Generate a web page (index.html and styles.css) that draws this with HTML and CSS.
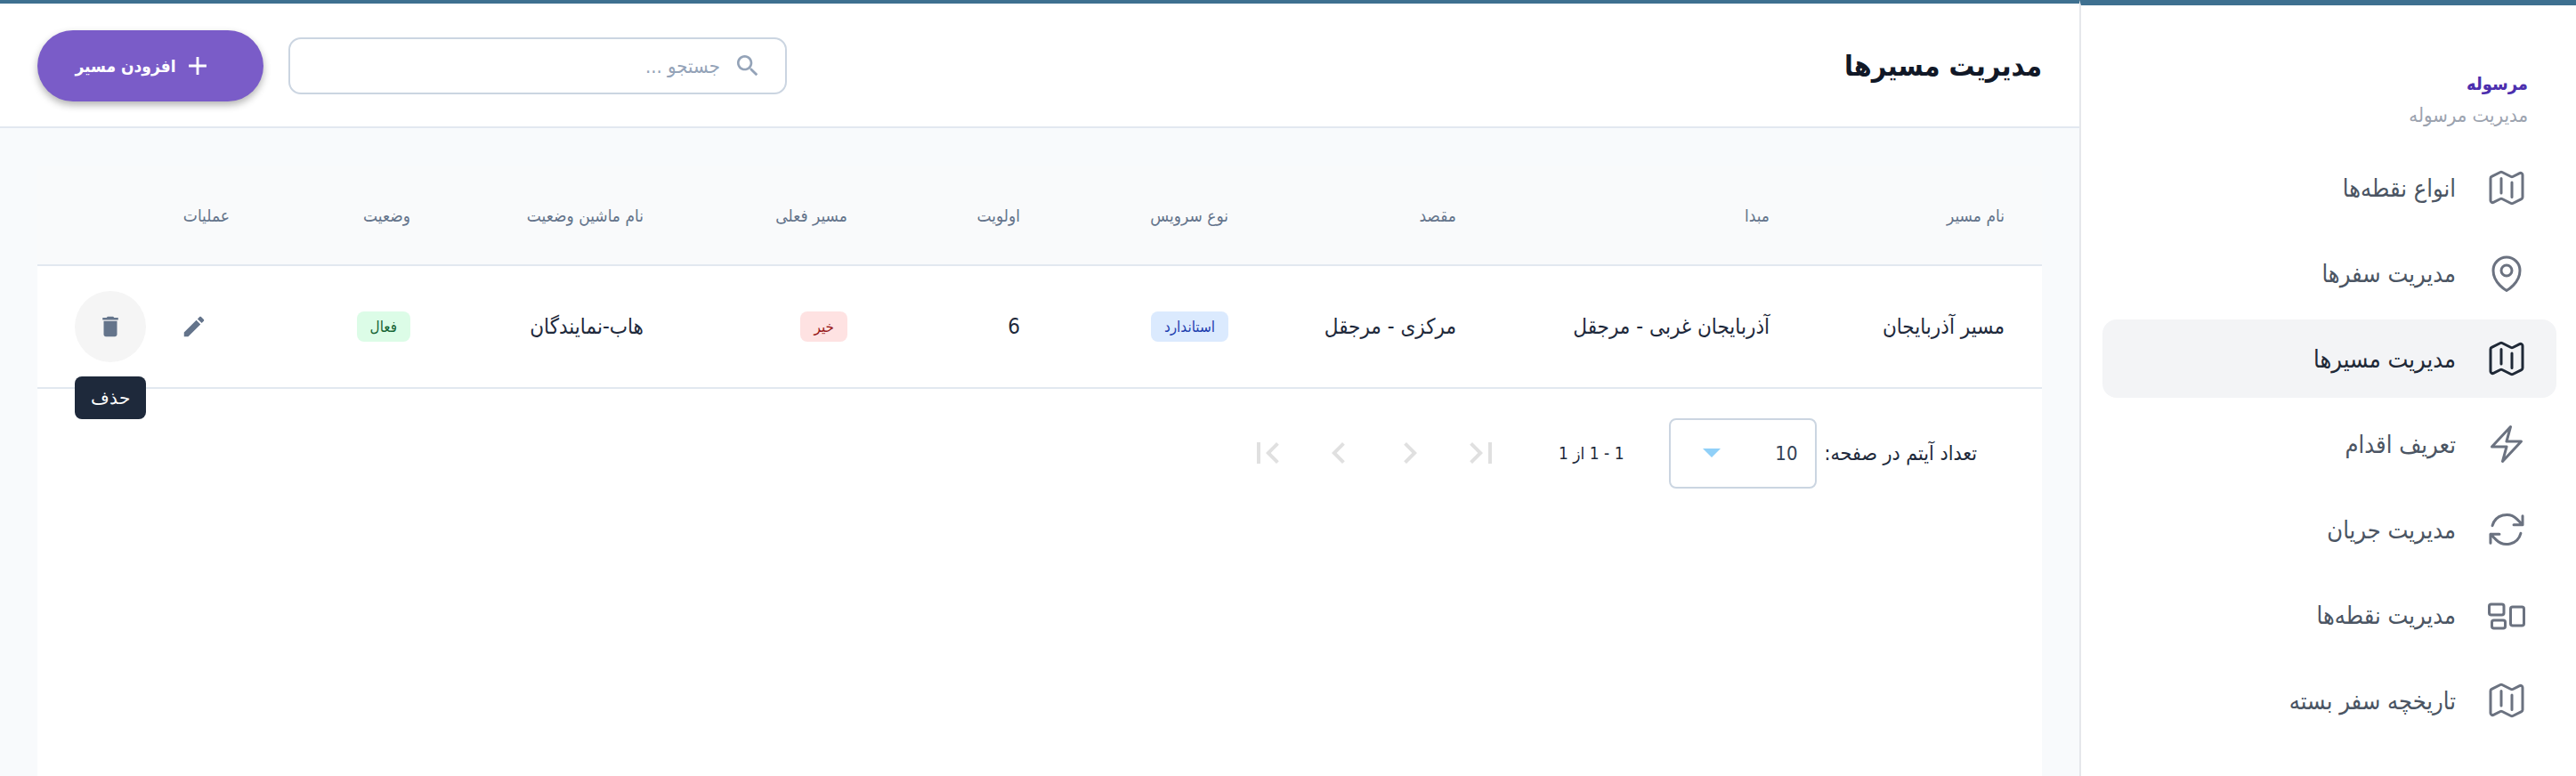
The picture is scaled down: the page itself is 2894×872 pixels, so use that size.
FILE: index.html
```html
<!DOCTYPE html>
<html lang="fa" dir="rtl">
<head>
  <meta charset="utf-8">
  <title>مدیریت مسیرها</title>
  <link rel="stylesheet" href="styles.css">
</head>
<body>
  <div class="page">
    <aside class="sidebar">
      <div class="brand">
        <div class="brand-title">مرسوله</div>
        <div class="brand-sub">مدیریت مرسوله</div>
      </div>
      <nav class="menu">
        <a class="menu-item">
          <svg class="menu-icon" viewBox="0 0 24 24"><path d="M9 6.75V15m6-6v8.25m.503 3.498 4.875-2.437c.381-.19.622-.58.622-1.006V4.82c0-.836-.88-1.38-1.628-1.006l-3.869 1.934c-.317.159-.69.159-1.006 0L9.503 3.252a1.125 1.125 0 0 0-1.006 0L3.622 5.689C3.24 5.88 3 6.27 3 6.695V19.18c0 .836.88 1.38 1.628 1.006l3.869-1.934c.317-.159.69-.159 1.006 0l4.994 2.497c.317.158.69.158 1.006 0Z"/></svg>
          <span>انواع نقطه‌ها</span>
        </a>
        <a class="menu-item">
          <svg class="menu-icon" viewBox="0 0 24 24"><path d="M15 10.5a3 3 0 1 1-6 0 3 3 0 0 1 6 0Z"/><path d="M19.5 10.5c0 7.142-7.5 11.25-7.5 11.25S4.5 17.642 4.5 10.5a7.5 7.5 0 1 1 15 0Z"/></svg>
          <span>مدیریت سفرها</span>
        </a>
        <a class="menu-item active">
          <svg class="menu-icon" viewBox="0 0 24 24"><path d="M9 6.75V15m6-6v8.25m.503 3.498 4.875-2.437c.381-.19.622-.58.622-1.006V4.82c0-.836-.88-1.38-1.628-1.006l-3.869 1.934c-.317.159-.69.159-1.006 0L9.503 3.252a1.125 1.125 0 0 0-1.006 0L3.622 5.689C3.24 5.88 3 6.27 3 6.695V19.18c0 .836.88 1.38 1.628 1.006l3.869-1.934c.317-.159.69-.159 1.006 0l4.994 2.497c.317.158.69.158 1.006 0Z"/></svg>
          <span>مدیریت مسیرها</span>
        </a>
        <a class="menu-item">
          <svg class="menu-icon" viewBox="0 0 24 24"><path d="m3.75 13.5 10.5-11.25L12 10.5h8.25L9.75 21.75 12 13.5H3.75Z"/></svg>
          <span>تعریف اقدام</span>
        </a>
        <a class="menu-item">
          <svg class="menu-icon" viewBox="0 0 24 24"><path d="M16.023 9.348h4.992v-.001M2.985 19.644v-4.992m0 0h4.992m-4.993 0 3.181 3.183a8.25 8.25 0 0 0 13.803-3.7M4.031 9.865a8.25 8.25 0 0 1 13.803-3.7l3.181 3.182m0-4.991v4.99"/></svg>
          <span>مدیریت جریان</span>
        </a>
        <a class="menu-item">
          <svg class="menu-icon" viewBox="0 0 24 24"><path d="M2.25 7.125C2.25 6.504 2.754 6 3.375 6h6c.621 0 1.125.504 1.125 1.125v3.75c0 .621-.504 1.125-1.125 1.125h-6a1.125 1.125 0 0 1-1.125-1.125v-3.75ZM14.25 8.625c0-.621.504-1.125 1.125-1.125h5.25c.621 0 1.125.504 1.125 1.125v8.25c0 .621-.504 1.125-1.125 1.125h-5.25a1.125 1.125 0 0 1-1.125-1.125v-8.25ZM3.75 16.125c0-.621.504-1.125 1.125-1.125h5.25c.621 0 1.125.504 1.125 1.125v2.25c0 .621-.504 1.125-1.125 1.125h-5.25a1.125 1.125 0 0 1-1.125-1.125v-2.25Z"/></svg>
          <span>مدیریت نقطه‌ها</span>
        </a>
        <a class="menu-item">
          <svg class="menu-icon" viewBox="0 0 24 24"><path d="M9 6.75V15m6-6v8.25m.503 3.498 4.875-2.437c.381-.19.622-.58.622-1.006V4.82c0-.836-.88-1.38-1.628-1.006l-3.869 1.934c-.317.159-.69.159-1.006 0L9.503 3.252a1.125 1.125 0 0 0-1.006 0L3.622 5.689C3.24 5.88 3 6.27 3 6.695V19.18c0 .836.88 1.38 1.628 1.006l3.869-1.934c.317-.159.69-.159 1.006 0l4.994 2.497c.317.158.69.158 1.006 0Z"/></svg>
          <span>تاریخچه سفر بسته</span>
        </a>
      </nav>
    </aside>

    <main class="main">
      <header class="topbar">
        <h1 class="page-title">مدیریت مسیرها</h1>
        <div class="topbar-actions">
          <label class="search">
            <svg class="search-icon" viewBox="0 0 24 24"><path d="M15.5 14h-.79l-.28-.27C15.41 12.59 16 11.11 16 9.5 16 5.91 13.09 3 9.5 3S3 5.91 3 9.5 5.91 16 9.5 16c1.61 0 3.09-.59 4.23-1.57l.27.28v.79l5 4.99L20.49 19l-4.99-5zm-6 0C7.01 14 5 11.99 5 9.5S7.01 5 9.5 5 14 7.01 14 9.5 11.99 14 9.5 14z"/></svg>
            <input class="search-input" type="text" placeholder="جستجو ...">
          </label>
          <button class="add-btn">
            <svg class="add-icon" viewBox="0 0 24 24"><path d="M19 13h-6v6h-2v-6H5v-2h6V5h2v6h6v2z"/></svg>
            <span>افزودن مسیر</span>
          </button>
        </div>
      </header>

      <div class="content">
        <section class="card">
          <table class="routes">
            <thead>
              <tr>
                <th>نام مسیر</th>
                <th>مبدا</th>
                <th>مقصد</th>
                <th>نوع سرویس</th>
                <th>اولویت</th>
                <th>مسیر فعلی</th>
                <th>نام ماشین وضعیت</th>
                <th>وضعیت</th>
                <th>عملیات</th>
              </tr>
            </thead>
            <tbody>
              <tr>
                <td>مسیر آذربایجان</td>
                <td>آذربایجان غربی - مرجقل</td>
                <td>مرکزی - مرجقل</td>
                <td><span class="badge blue">استاندارد</span></td>
                <td>6</td>
                <td><span class="badge red">خیر</span></td>
                <td>هاب-نمایندگان</td>
                <td><span class="badge green">فعال</span></td>
                <td class="actions-cell">
                  <div class="actions">
                    <button class="icon-btn">
                      <svg class="row-icon" viewBox="0 0 24 24"><path d="M3 17.25V21h3.75L17.81 9.94l-3.75-3.75L3 17.25zM20.71 7.04c.39-.39.39-1.02 0-1.41l-2.34-2.34c-.39-.39-1.02-.39-1.41 0l-1.83 1.83 3.75 3.75 1.83-1.83z"/></svg>
                    </button>
                    <button class="icon-btn hovered">
                      <svg class="row-icon" viewBox="0 0 24 24"><path d="M6 19c0 1.1.9 2 2 2h8c1.1 0 2-.9 2-2V7H6v12zM19 4h-3.5l-1-1h-5l-1 1H5v2h14V4z"/></svg>
                      <span class="tooltip">حذف</span>
                    </button>
                  </div>
                </td>
              </tr>
            </tbody>
          </table>

          <div class="pager">
            <span class="pager-label">تعداد آیتم در صفحه:</span>
            <div class="pager-select">
              <span>10</span>
              <span class="caret"></span>
            </div>
            <span class="pager-range">1 - 1 از 1</span>
            <div class="pager-btns">
              <span class="pager-btn"><svg viewBox="0 0 24 24"><path d="M5.59 7.41 10.18 12l-4.59 4.59L7 18l6-6-6-6zM16 6h2v12h-2z"/></svg></span>
              <span class="pager-btn"><svg viewBox="0 0 24 24"><path d="M10 6 8.59 7.41 13.17 12l-4.58 4.59L10 18l6-6z"/></svg></span>
              <span class="pager-btn"><svg viewBox="0 0 24 24"><path d="M15.41 7.41 14 6l-6 6 6 6 1.41-1.41L10.83 12z"/></svg></span>
              <span class="pager-btn"><svg viewBox="0 0 24 24"><path d="M18.41 16.59 13.82 12l4.59-4.59L17 6l-6 6 6 6zM6 6h2v12H6z"/></svg></span>
            </div>
          </div>
        </section>
      </div>
    </main>
  </div>
</body>
</html>
```

FILE: styles.css
```css
* {
  box-sizing: border-box;
}

html, body {
  margin: 0;
  height: 100%;
}

body {
  font-family: "DejaVu Sans Condensed", "DejaVu Sans", "Noto Sans", sans-serif;
  font-stretch: condensed;
  color: #1e293b;
  background: #fff;
  overflow: hidden;
}

.page {
  display: flex;
  height: 872px;
}

/* sidebar */
.sidebar {
  width: 558px;
  flex: none;
  border-top: 6px solid #3e7090;
  border-left: 2px solid #e5e7eb;
  background: #fff;
  padding: 0 22px 0 24px;
}

.brand {
  padding: 75px 32px 0 0;
  height: 161px;
  text-align: right;
}

.brand-title {
  font-size: 20px;
  line-height: 26px;
  font-weight: bold;
  color: #4c2fae;
  height: 36px;
}

.brand-sub {
  font-size: 22px;
  line-height: 26px;
  color: #9ca3af;
}

.menu {
  display: flex;
  flex-direction: column;
  gap: 8px;
}

.menu-item {
  display: flex;
  align-items: center;
  gap: 33px;
  height: 88px;
  padding: 0 32px;
  border-radius: 16px;
  font-size: 27px;
  color: #4b5563;
}

.menu-item.active {
  background: #f3f4f6;
  color: #1f2937;
}

.menu-icon {
  width: 48px;
  height: 48px;
  flex: none;
  fill: none;
  stroke: #6b7280;
  stroke-width: 1.5;
  stroke-linecap: round;
  stroke-linejoin: round;
}

.menu-item.active .menu-icon {
  stroke: #1f2937;
}

/* main */
.main {
  flex: 1;
  min-width: 0;
  display: flex;
  flex-direction: column;
  border-top: 4px solid #3e7090;
  padding-top: 2px;
  background: #f8fafc;
}

.topbar {
  height: 138px;
  flex: none;
  display: flex;
  align-items: center;
  justify-content: space-between;
  padding: 0 42px;
  background: #fff;
  border-bottom: 2px solid #e2e8f0;
}

.page-title {
  margin: 0;
  font-size: 32px;
  font-weight: bold;
  color: #111827;
}

.topbar-actions {
  display: flex;
  align-items: center;
  gap: 28px;
}

.search {
  display: flex;
  align-items: center;
  gap: 13px;
  width: 560px;
  height: 64px;
  padding: 0 26px;
  border: 2px solid #cbd5e1;
  border-radius: 14px;
  background: #fff;
}

.search-icon {
  width: 32px;
  height: 32px;
  flex: none;
  fill: #94a3b8;
}

.search-input {
  flex: 1;
  min-width: 0;
  border: none;
  outline: none;
  background: none;
  font: inherit;
  font-size: 22px;
  color: #1e293b;
}

.search-input::placeholder {
  color: #94a3b8;
  opacity: 1;
}

.add-btn {
  display: flex;
  align-items: center;
  justify-content: center;
  gap: 7px;
  width: 254px;
  height: 80px;
  padding: 0 15px 0 0;
  border: none;
  border-radius: 40px;
  background: #7a5cc8;
  color: #fff;
  font: inherit;
  font-size: 19px;
  font-weight: bold;
  box-shadow: 0 4px 8px rgba(0, 0, 0, .3);
}

.add-icon {
  width: 34px;
  height: 34px;
  fill: #fff;
}

.content {
  flex: 1;
  min-height: 0;
  padding: 42px 42px 0;
}

.card {
  height: 100%;
  background: #fff;
  border-radius: 16px 16px 0 0;
}

/* table */
.routes {
  width: 100%;
  table-layout: fixed;
  border-collapse: collapse;
}

.routes th {
  height: 112px;
  padding: 0 42px;
  font-size: 19px;
  font-weight: normal;
  text-align: right;
  white-space: nowrap;
  color: #64748b;
  background: #f9fafb;
  border-bottom: 2px solid #e2e8f0;
}

.routes td {
  height: 138px;
  padding: 0 42px;
  font-size: 24px;
  text-align: right;
  white-space: nowrap;
  color: #1e293b;
  border-bottom: 2px solid #e2e8f0;
}

.routes th:nth-child(1) { width: 264px; }
.routes th:nth-child(2) { width: 352px; }
.routes th:nth-child(3) { width: 256px; }
.routes th:nth-child(4) { width: 234px; }
.routes th:nth-child(5) { width: 194px; }
.routes th:nth-child(6) { width: 229px; }
.routes th:nth-child(7) { width: 262px; }
.routes th:nth-child(8) { width: 203px; }
.routes th:nth-child(9) { width: 258px; }

.badge {
  display: inline-flex;
  align-items: center;
  height: 34px;
  padding: 0 15px;
  border-radius: 8px;
  font-size: 17px;
}

.badge.blue {
  background: #dbeafe;
  color: #1e40af;
}

.badge.red {
  background: #fee2e2;
  color: #991b1b;
}

.badge.green {
  background: #dcfce7;
  color: #166534;
}

.actions {
  display: flex;
  gap: 14px;
}

.icon-btn {
  position: relative;
  display: flex;
  align-items: center;
  justify-content: center;
  width: 80px;
  height: 80px;
  padding: 0;
  border: none;
  border-radius: 50%;
  background: none;
}

.icon-btn.hovered {
  background: #f5f5f5;
}

.row-icon {
  width: 30px;
  height: 30px;
  fill: #64748b;
}

.tooltip {
  position: absolute;
  top: 96px;
  left: 0;
  width: 80px;
  height: 48px;
  display: flex;
  align-items: center;
  justify-content: center;
  border-radius: 8px;
  background: #1e293b;
  color: #fff;
  font-size: 20px;
}

/* pagination */
.pager {
  display: flex;
  align-items: center;
  padding: 32px 73px 0 0;
}

.pager-label {
  font-size: 23px;
  margin-left: 9px;
}

.pager-select {
  display: flex;
  align-items: center;
  justify-content: space-between;
  width: 166px;
  height: 79px;
  padding: 0 19px 0 36px;
  border: 2px solid #cbd5e1;
  border-radius: 8px;
  font-size: 22px;
  color: #334155;
  margin-left: 50px;
}

.caret {
  width: 0;
  height: 0;
  border-style: solid;
  border-width: 10px 10px 0;
  border-color: #90d0f8 transparent transparent;
}

.pager-range {
  font-size: 19px;
  margin-left: 47px;
}

.pager-btns {
  display: flex;
}

.pager-btn {
  display: flex;
  align-items: center;
  justify-content: center;
  width: 80px;
  height: 80px;
}

.pager-btn svg {
  width: 48px;
  height: 48px;
  fill: #e0e0e0;
}
```
